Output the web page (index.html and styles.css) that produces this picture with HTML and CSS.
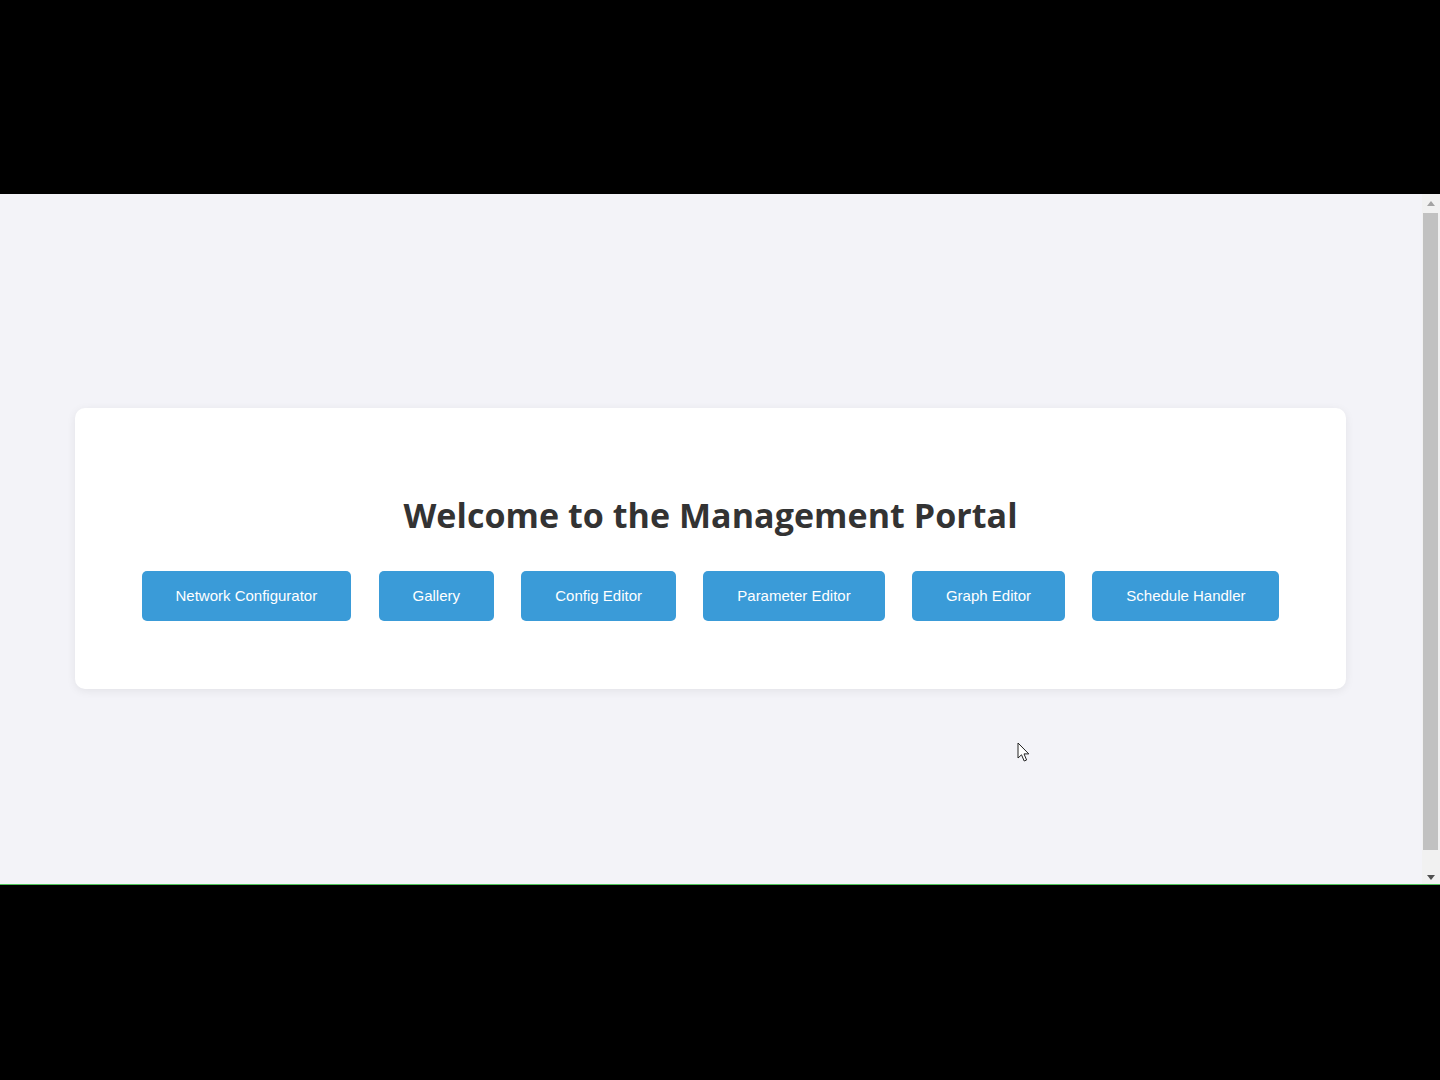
FILE: index.html
```html
<!DOCTYPE html>
<html lang="en">
<head>
<meta charset="utf-8">
<title>Management Portal</title>
<link rel="stylesheet" href="styles.css">
</head>
<body>
<div class="screen">
  <div class="letterbox-top"></div>
  <div class="viewport">
    <main class="page">
      <section class="card">
        <h1 class="title">Welcome to the Management Portal</h1>
        <nav class="actions">
          <button class="btn">Network Configurator</button>
          <button class="btn">Gallery</button>
          <button class="btn">Config Editor</button>
          <button class="btn">Parameter Editor</button>
          <button class="btn">Graph Editor</button>
          <button class="btn">Schedule Handler</button>
        </nav>
      </section>
    </main>
    <div class="scrollbar">
      <div class="sb-arrow sb-up"><span class="tri-up"></span></div>
      <div class="sb-track"><div class="sb-thumb"></div></div>
      <div class="sb-arrow sb-down"><span class="tri-down"></span></div>
    </div>
  </div>
  <div class="letterbox-bottom"></div>
  <svg class="cursor" width="14" height="22" viewBox="0 0 14 22">
    <path d="M1 1 L1 16 L4.5 12.8 L7.2 19 L9.6 18 L7 11.9 L11.8 11.9 Z" fill="#fff" stroke="#222" stroke-width="1" stroke-linejoin="round"/>
  </svg>
</div>
</body>
</html>
```

FILE: styles.css
```css
html, body {
  margin: 0;
  padding: 0;
  background: #000;
}

.screen {
  position: relative;
  width: 1440px;
  height: 1080px;
  display: flex;
  flex-direction: column;
  overflow: hidden;
}

.letterbox-top {
  height: 194px;
  background: #000;
  flex: none;
}

.viewport {
  height: 690px;
  flex: none;
  display: flex;
  background: #f3f3f8;
  border-bottom: 1px solid #4fc45a;
}

.letterbox-bottom {
  flex: 1;
  background: #000;
}

.page {
  flex: 1;
  display: flex;
  flex-direction: column;
  align-items: flex-start;
  padding: 214px 0 0 75px;
}

.card {
  width: 1271px;
  box-sizing: border-box;
  background: #fff;
  border-radius: 10px;
  box-shadow: 0 2px 10px rgba(0, 0, 0, 0.07);
  padding: 83px 40px 68px;
  display: flex;
  flex-direction: column;
  align-items: center;
}

.title {
  margin: 0 0 32px;
  font-family: "Open Sans", "Noto Sans", sans-serif;
  font-weight: 700;
  font-size: 34px;
  line-height: 48px;
  color: #333;
  letter-spacing: 0.05px;
}

.actions {
  display: flex;
  gap: 27.6px;
  justify-content: center;
}

.btn {
  font-family: "Liberation Sans", Arial, sans-serif;
  font-size: 15px;
  line-height: 18px;
  color: #fff;
  background: #3a9bd8;
  border: none;
  border-radius: 5px;
  padding: 16px 33.85px;
  height: 50px;
  cursor: pointer;
}

.scrollbar {
  width: 18px;
  flex: none;
  background: #f1f1f1;
  display: flex;
  flex-direction: column;
}

.sb-arrow {
  height: 18px;
  display: flex;
  align-items: center;
  justify-content: center;
  flex: none;
}

.sb-track {
  flex: 1;
  padding: 1px 2px 0 1px;
  display: flex;
  flex-direction: column;
}

.sb-thumb {
  height: 637px;
  background: #c1c1c1;
}

.tri-up {
  width: 0;
  height: 0;
  border-left: 4.5px solid transparent;
  border-right: 4.5px solid transparent;
  border-bottom: 5px solid #a3a3a3;
}

.tri-down {
  width: 0;
  height: 0;
  border-left: 4.5px solid transparent;
  border-right: 4.5px solid transparent;
  border-top: 5px solid #505050;
  margin-top: 4px;
}

.cursor {
  position: absolute;
  left: 1017px;
  top: 742px;
}
```
